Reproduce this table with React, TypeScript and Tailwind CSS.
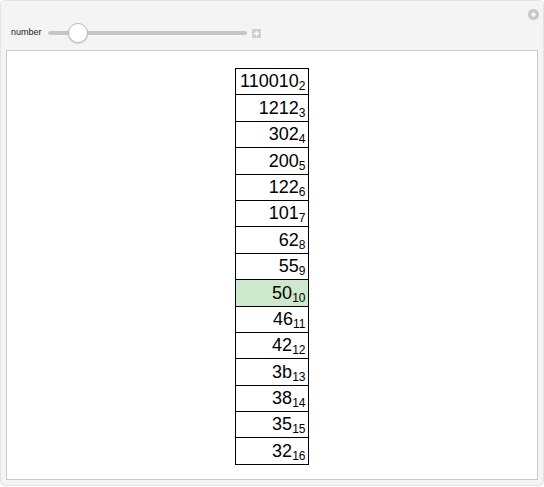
const rows: [string, number][] = [
  ['110010', 2],
  ['1212', 3],
  ['302', 4],
  ['200', 5],
  ['122', 6],
  ['101', 7],
  ['62', 8],
  ['55', 9],
  ['50', 10],
  ['46', 11],
  ['42', 12],
  ['3b', 13],
  ['38', 14],
  ['35', 15],
  ['32', 16],
]

export default function App() {
  return (
    <div className="w-[544px] h-[487px] bg-white font-['Liberation_Sans',Arial,sans-serif]">
      <div className="relative w-[544px] h-[486px] bg-[#f4f4f4] border border-[#e3e3e3] rounded-[5px] flex flex-col">
        {/* close icon */}
        <div className="absolute right-[4px] top-[8px] w-[11px] h-[11px] rounded-full bg-[#c8c8c8] flex items-center justify-center">
          <svg width="7" height="7" viewBox="0 0 7 7">
            <path d="M3.5 1v5M1 3.5h5" stroke="white" strokeWidth="1.6" />
          </svg>
        </div>

        {/* controls */}
        <div className="flex items-center h-[48px] pt-[16px] pl-[10px]">
          <span className="text-[9px] text-[#222]">number</span>
          <div className="relative ml-[6px] w-[199px] h-[20px] flex items-center">
            <div className="w-full h-[4px] rounded-full bg-[#c6c6c6]" />
            <div className="absolute left-[20px] top-0 w-[20px] h-[20px] rounded-full bg-white border border-[#b9b9b9] shadow-[0_1px_1px_rgba(0,0,0,0.15)]" />
          </div>
          <div className="ml-[5px] w-[9px] h-[9px] bg-[#cfcfcf] flex items-center justify-center">
            <svg width="7" height="7" viewBox="0 0 7 7">
              <path d="M3.5 1v5M1 3.5h5" stroke="white" strokeWidth="1.4" />
            </svg>
          </div>
        </div>

        {/* output panel */}
        <div className="mx-[5px] mt-[1px] h-[430px] bg-white border border-[#c9c9c9] flex justify-center pt-[17px]">
          <table className="border-collapse h-fit ml-[-1px]">
            <tbody>
              {rows.map(([n, b]) => (
                <tr key={b} className={b === 10 ? 'bg-[#cde8cc]' : ''}>
                  <td className="border border-black w-[73px] h-[26.4px] p-0 pr-[2px] text-right text-[18px] leading-none text-black align-bottom pb-[4px]">
                    {n}
                    <sub className="text-[12px] text-black align-baseline relative top-[3px]">{b}</sub>
                  </td>
                </tr>
              ))}
            </tbody>
          </table>
        </div>
      </div>
    </div>
  )
}
